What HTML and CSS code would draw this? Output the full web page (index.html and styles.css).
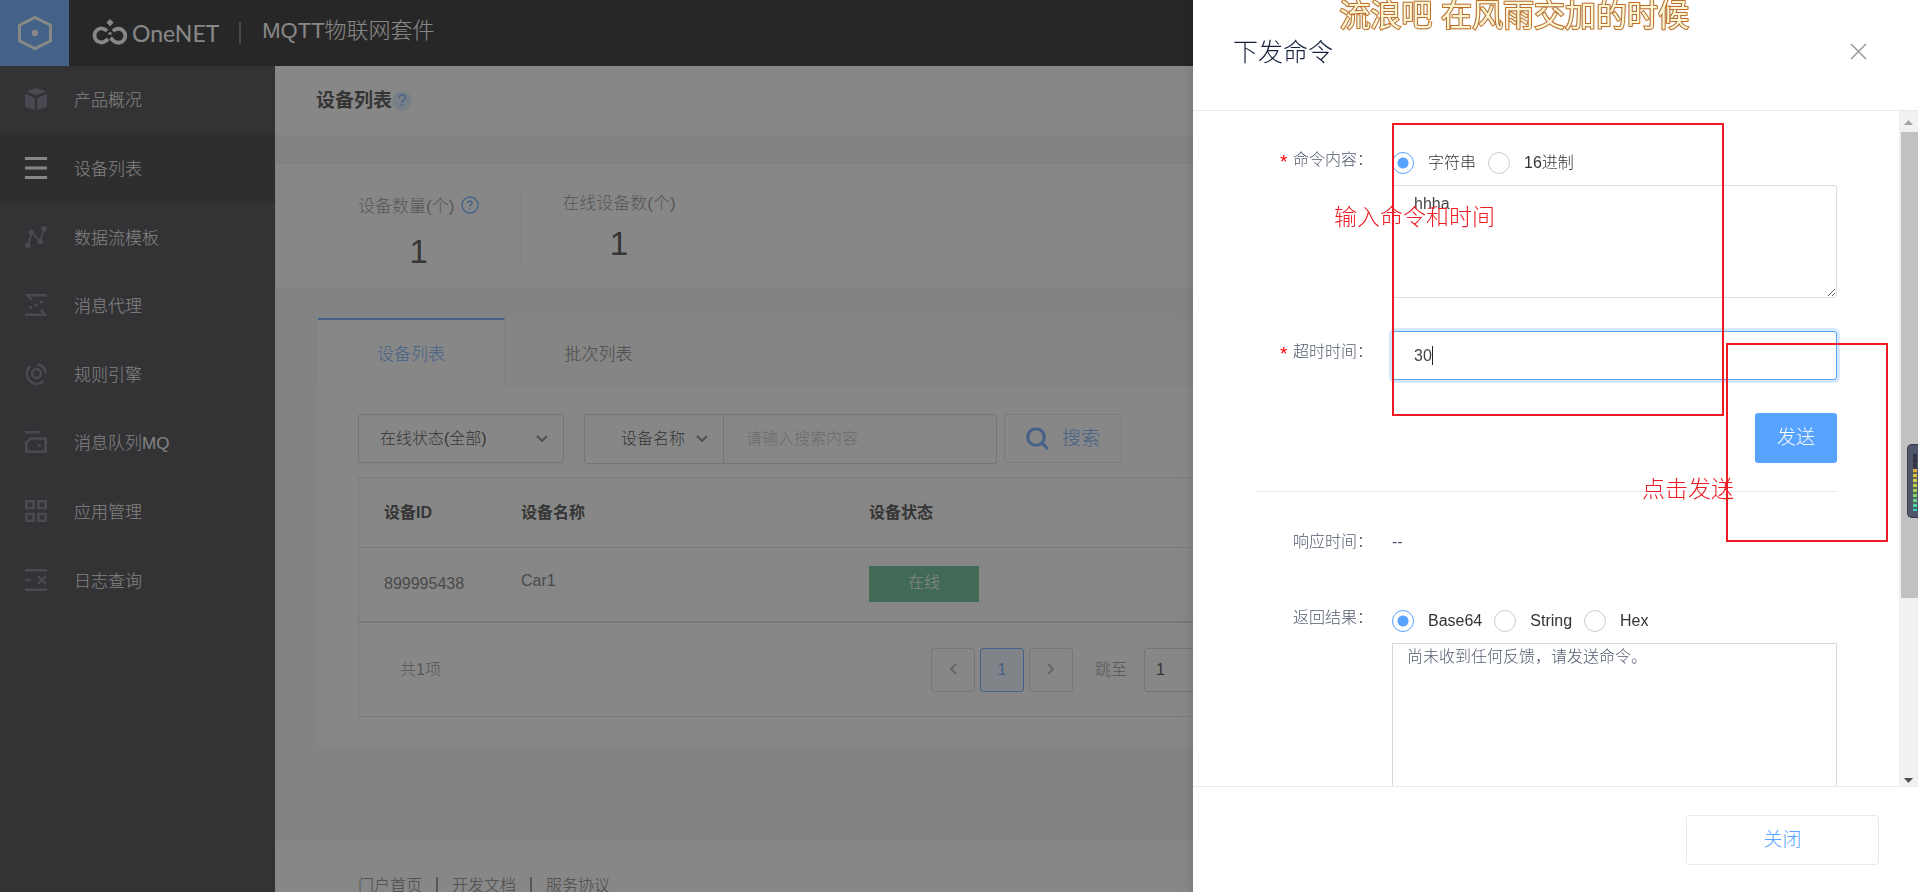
FILE: index.html
```html
<!DOCTYPE html>
<html lang="zh-CN">
<head>
<meta charset="utf-8">
<title>MQTT物联网套件 - 设备列表</title>
<link rel="stylesheet" href="styles.css">
</head>
<body>
<div class="app">
  <header class="topbar">
    <a class="home" href="#" aria-label="首页">
      <svg width="36" height="36" viewBox="0 0 36 36" fill="none" stroke="#fff" stroke-width="3"><path d="M18 2.500 33.500 10.200V25.800L18 33.500 2.500 25.800V10.200Z"/><circle cx="18" cy="18" r="3.200" fill="#fff" stroke="none"/></svg>
    </a>
    <a class="brand" href="#">
      <svg width="38" height="26" viewBox="0 0 38 26" fill="none" stroke="#fff" stroke-width="3.800"><path d="M16 12.200A7 7 0 1 0 15 21.800L17 19.800"/><path d="M22 12.200A7 7 0 1 1 22.500 21.800L19.500 19"/><path d="M17.500 14.500H20.500" stroke-width="2.500"/><path d="M19 0 22.500 3.500 19 7.500 15.500 3.500Z" fill="#fff" stroke="none"/></svg>
      <span>OneNET</span>
    </a>
    <span class="split"></span>
    <span class="product">MQTT物联网套件</span>
  </header>
  <div class="shell">
    <aside class="sidebar">
      <nav class="menu">
        <a href="#"><svg viewBox="0 0 22 22" fill="currentColor"><path d="M11 0 21 3.500 11 7.500 1.500 3.500ZM0 6 9.800 10V22L2 19.500Q0 18.800 0 17ZM22 6 12.200 10V22L20 19.500Q22 18.800 22 17Z"/></svg>产品概况</a>
        <a href="#" class="active"><svg viewBox="0 0 22 22" stroke="currentColor" stroke-width="3"><path d="M0 1.500H22M0 11H22M0 20.500H22"/></svg>设备列表</a>
        <a href="#"><svg viewBox="0 0 22 22" stroke="currentColor" stroke-width="1.600" fill="none"><path d="M3 19 7 6 15 16 19 3"/><g fill="currentColor" stroke="none"><circle cx="2.800" cy="19.200" r="2.800"/><circle cx="6.500" cy="6.500" r="2.800"/><circle cx="15.200" cy="15.500" r="2.800"/><circle cx="19.200" cy="2.800" r="2.800"/></g></svg>数据流模板</a>
        <a href="#"><svg viewBox="0 0 22 22" stroke="currentColor" stroke-width="2.400" fill="none"><path d="M22 1.200H2.500L7 6M0 20.800H20L16 16M4 13.500H7M9.500 11H12.500M15 8H18"/></svg>消息代理</a>
        <a href="#"><svg viewBox="0 0 22 22" stroke="currentColor" stroke-width="2.400" fill="none"><circle cx="11.500" cy="10.500" r="4.500"/><path d="M5 3.500A9.800 9.800 0 1 0 18.500 18.200M12 1.200A9.500 9.500 0 0 1 20.800 10"/></svg>规则引擎</a>
        <a href="#"><svg viewBox="0 0 22 22" stroke="currentColor" stroke-width="2.600" fill="none"><path d="M0 1.300H15M5.500 7.500H20.700V20.700H1.300V11.500ZM13 14.500H16"/></svg>消息队列MQ</a>
        <a href="#"><svg viewBox="0 0 22 22" stroke="currentColor" stroke-width="2.600" fill="none"><path d="M1.300 1.300H8.500V8H1.300ZM13.500 1.300H20.700V8H13.500ZM1.300 14H8.500V20.700H1.300ZM13.500 14H20.700V20.700H13.500Z"/></svg>应用管理</a>
        <a href="#"><svg viewBox="0 0 22 22" stroke="currentColor" stroke-width="2.400" fill="none"><path d="M0 1.200H22M0 20.800H22M0 11H5.500M13 7 21 15M21 7 13 15"/></svg>日志查询</a>
      </nav>
    </aside>
    <main class="main">
      <div class="pagehead"><h1>设备列表</h1><span class="tip">?</span></div>
      <section class="stats">
        <div class="stat first">
          <div class="stat-label">设备数量(个)<svg width="18" height="18" viewBox="0 0 18 18" fill="none" stroke="#57a3ff" stroke-width="1.400"><circle cx="9" cy="9" r="8"/><path d="M6.800 7.200Q6.900 5 9 5T11.200 7Q11.200 8 9.900 8.800 9 9.400 9 10.500M9 12v1.400"/></svg></div>
          <div class="stat-num">1</div>
        </div>
        <div class="stat">
          <div class="stat-label">在线设备数(个)</div>
          <div class="stat-num">1</div>
        </div>
      </section>
      <section class="panel">
        <div class="tabs"><button type="button" class="on">设备列表</button><button type="button">批次列表</button></div>
        <div class="panel-body">
          <form class="filters">
            <label class="pick status"><select aria-label="在线状态"><option>在线状态(全部)</option></select><svg width="12" height="8" viewBox="0 0 12 8"><path d="M1 1 6 6 11 1"/></svg></label>
            <div class="group">
              <label class="pick field"><select aria-label="搜索字段"><option>设备名称</option></select><svg width="12" height="8" viewBox="0 0 12 8"><path d="M1 1 6 6 11 1"/></svg></label>
              <input class="keyword" type="text" placeholder="请输入搜索内容" aria-label="搜索内容">
            </div>
            <button type="button" class="search"><svg width="23" height="23" viewBox="0 0 23 23" fill="none" stroke="#57a3ff" stroke-width="3"><circle cx="10" cy="10" r="8.300"/><path d="M16 16 22 22"/></svg>搜索</button>
          </form>
          <div class="listing">
            <table>
              <thead><tr><th class="c-id">设备ID</th><th class="c-name">设备名称</th><th>设备状态</th></tr></thead>
              <tbody><tr><td class="dev-id">899995438</td><td class="dev-name">Car1</td><td><span class="online">在线</span></td></tr></tbody>
            </table>
            <div class="pager">
              <span class="total">共1项</span>
              <button type="button" aria-label="上一页"><svg width="8" height="12" viewBox="0 0 8 12"><path d="M7 1 2 6 7 11"/></svg></button>
              <button type="button" class="on">1</button>
              <button type="button" aria-label="下一页"><svg width="8" height="12" viewBox="0 0 8 12"><path d="M1 1 6 6 1 11"/></svg></button>
              <label for="jump">跳至</label>
              <input id="jump" type="text" value="1">
            </div>
          </div>
        </div>
      </section>
      <footer class="foot"><a href="#">门户首页</a><i></i><a href="#">开发文档</a><i></i><a href="#">服务协议</a></footer>
    </main>
  </div>
</div>
<div class="mask"></div>

<section class="drawer" role="dialog" aria-labelledby="drawer-title">
  <header class="drawer-head">
    <h2 id="drawer-title">下发命令</h2>
    <button type="button" class="close" aria-label="关闭窗口"><svg width="17" height="17" viewBox="0 0 17 17" stroke="#999" stroke-width="1.500"><path d="M1 1 16 16M16 1 1 16"/></svg></button>
  </header>
  <div class="drawer-body">
    <form class="form">
      <div class="row command">
        <label class="name req" for="cmd">命令内容：</label>
        <div class="ctl">
          <div class="radios">
            <label><input type="radio" name="kind" checked>字符串</label>
            <label><input type="radio" name="kind">16进制</label>
          </div>
          <textarea id="cmd">hhha</textarea>
        </div>
      </div>
      <div class="row timeout">
        <label class="name req" for="timeout">超时时间：</label>
        <div class="ctl caret-box"><input id="timeout" class="time" type="text" value="30"><span class="caret"></span></div>
      </div>
      <button type="button" class="send">发送</button>
      <hr>
      <div class="row reply"><span class="name">响应时间：</span><span class="ctl">--</span></div>
      <div class="row result">
        <span class="name">返回结果：</span>
        <div class="ctl">
          <div class="radios">
            <label><input type="radio" name="fmt" checked>Base64</label>
            <label><input type="radio" name="fmt">String</label>
            <label><input type="radio" name="fmt">Hex</label>
          </div>
          <div class="output">尚未收到任何反馈，请发送命令。</div>
        </div>
      </div>
    </form>
    <div class="scroll">
      <svg width="9" height="5" viewBox="0 0 9 5" fill="#a3a3a3"><path d="M0 5 4.500 0 9 5Z"/></svg>
      <span class="thumb"></span>
      <svg width="9" height="5" viewBox="0 0 9 5" fill="#505050"><path d="M0 0H9L4.500 5Z"/></svg>
    </div>
  </div>
  <footer class="drawer-foot"><button type="button">关闭</button></footer>
</section>

<div class="lyric">流浪吧 在风雨交加的时候</div>
<div class="mark box-input"></div>
<div class="mark box-send"></div>
<div class="note note-input">输入命令和时间</div>
<div class="note note-send">点击发送</div>
<div class="meter"><span></span></div>
</body>
</html>
```

FILE: styles.css
```css
* { box-sizing: border-box; }
body {
  margin: 0;
  height: 100vh;
  overflow: hidden;
  font: 300 16px/24px "Liberation Sans", "Noto Sans CJK SC", sans-serif;
  color: #666;
}
button, input, select, textarea { font: inherit; color: inherit; margin: 0; }
button { padding: 0; background: #fff; border: 1px solid #e0e0e0; border-radius: 3px; }
a { color: inherit; text-decoration: none; }
h1, h2 { margin: 0; }

/* top bar */
.app { height: 100vh; overflow: hidden; display: flex; flex-direction: column; background: #f5f5f5; }
.topbar { flex: none; height: 66px; display: flex; align-items: center; background: #0f0f0f; color: #fff; }
.home { width: 69px; height: 66px; display: flex; align-items: center; justify-content: center; background: #57a3ff; }
.brand { display: flex; align-items: center; gap: 3px; margin-left: 22px; font: 400 23px/30px Lato, sans-serif; }
.brand svg { margin-bottom: 2px; }
.split { width: 2px; height: 22px; margin: 0 21px 0 20px; background: #666; }
.product { font-size: 22px; line-height: 30px; margin-bottom: 4px; }

/* side menu */
.shell { flex: 1; display: flex; min-height: 0; }
.sidebar { flex: none; width: 275px; background: #2d2d32; }
.menu { display: grid; grid-template-rows: repeat(8, 1fr); height: 549px; }
.menu a { display: flex; align-items: center; gap: 27px; padding: 2px 0 0 25px; font-size: 17px; color: #f0f0f0; }
.menu svg { width: 22px; height: 22px; margin-bottom: 4px; color: #67677a; }
.menu .active { background: #212121; }
.menu .active svg { color: #fff; }

/* page */
.main { flex: 1; display: flex; flex-direction: column; min-width: 0; }
.pagehead { flex: none; height: 69px; display: flex; align-items: center; padding-left: 41px; background: #fff; }
.pagehead h1 { font-size: 19px; font-weight: 700; color: #333; }
.tip { width: 20px; height: 20px; border-radius: 50%; background: #dcebff; color: #57a3ff; text-align: center; line-height: 20px; }
.stats { flex: none; display: flex; height: 127px; margin-top: 28px; padding: 23px 41px; background: #fff; border: 1px solid #ececec; }
.stat { padding: 5px 41px 0; color: #888; font-size: 17px; text-align: center; }
.stat.first { padding-top: 8px; border-right: 1px solid #efefef; }
.stat-label { display: flex; align-items: center; gap: 7px; }
.stat-label svg { margin-bottom: 4px; }
.stat-num { margin-top: 10px; font-size: 33px; line-height: 36px; color: #333; }
.first .stat-num { margin-top: 15px; }
.panel { flex: none; margin: 27px 41px 0; padding-bottom: 29px; background: #fff; }
.tabs { display: flex; height: 70px; padding-left: 1px; background: #f9f9f9; border: 1px solid #efefef; }
.tabs button { width: 187px; height: 69px; padding-top: 4px; border: 0; border-radius: 0; background: none; font-size: 17px; }
.tabs .on { padding-top: 2px; background: #fff; border-top: 2px solid #57a3ff; border-right: 1px solid #ececec; color: #57a3ff; }
.panel-body { padding: 27px 41px 0 42px; }
.filters { display: flex; height: 50px; color: #333; }
.pick { position: relative; display: block; height: 49px; }
.pick select { width: 100%; height: 100%; padding: 0 21px; appearance: none; border: 1px solid #d2d2d2; border-radius: 3px; background: #fff; }
.pick svg { position: absolute; right: 16px; top: 21px; fill: none; stroke: #777; stroke-width: 2; }
.status { width: 206px; margin-right: 20px; }
.group { display: flex; width: 413px; height: 50px; margin-right: 7px; }
.field { width: 140px; height: 50px; }
.field select { padding: 0 0 0 36px; border-radius: 3px 0 0 3px; }
.keyword { flex: 1; min-width: 0; height: 50px; padding: 0 22px; border: 1px solid #d2d2d2; border-left: 0; border-radius: 0 3px 3px 0; }
.keyword::placeholder { color: #bbb; }
.search { width: 118px; height: 49px; display: flex; align-items: center; justify-content: center; gap: 13px; font-size: 19px; color: #57a3ff; }

.listing { margin-top: 13px; border: 1px solid #e4e4e4; }
table { width: 100%; border-collapse: collapse; table-layout: fixed; }
th { height: 69px; padding: 2px 0 0; text-align: left; font-weight: 700; color: #333; border-bottom: 1px solid #e4e4e4; }
td { height: 75px; padding: 0; border-bottom: 2px solid #dadada; }
th.c-id { width: 162px; }
th.c-name { width: 348px; }
th.c-id, td.dev-id { padding-left: 25px; }
td.dev-name { padding-bottom: 6px; }
.online { display: block; width: 110px; height: 36px; line-height: 34px; text-align: center; background: #52b684; color: #fff; }
.pager { display: flex; align-items: center; height: 93px; padding-left: 41px; color: #888; }
.total { width: 531px; }
.pager button { width: 44px; height: 44px; margin-right: 5px; border-color: #d8d8d8; }
.pager button svg { fill: none; stroke: #aaa; stroke-width: 2; }
.pager .on { border-color: #57a3ff; background: #eef5ff; color: #57a3ff; }
.pager label { margin: 0 17px; }
#jump { width: 66px; height: 44px; padding: 0 11px; border: 1px solid #d2d2d2; border-radius: 3px; color: #333; }
.foot { flex: 1 0 auto; display: flex; gap: 14px; margin-top: 95px; padding: 33px 83px; background: #fff; }
.foot i { width: 2px; height: 18px; margin-top: 3px; background: #888; }

.mask { position: fixed; inset: 0; background: rgba(55, 55, 55, .6); }

/* drawer */
.drawer { position: fixed; inset: 0 0 0 auto; width: 725px; display: flex; flex-direction: column; background: #fff; box-shadow: 0 4px 12px rgba(0, 0, 0, .15); color: #515a6e; }
.drawer-head { flex: none; height: 111px; display: flex; align-items: flex-start; justify-content: space-between; padding: 35px 51px 0 40px; border-bottom: 1px solid #e8eaec; }
.drawer-head h2 { font-size: 25px; line-height: 34px; font-weight: 300; color: #17233d; }
.close { height: 32px; border: 0; background: none; }
.close svg { display: block; }
.drawer-body { flex: 1; min-height: 0; display: flex; overflow: hidden; }
.form { flex: 1; min-width: 0; padding: 37px 62px 0 62px; }
.row { display: flex; }
.name { flex: none; width: 137px; padding-left: 38px; white-space: nowrap; }
.req { padding-left: 25px; }
.req::before { content: "*"; display: inline-block; width: 13px; color: #f00; vertical-align: -3px; font-size: 19px; line-height: 16px; }
.ctl { flex: 1; min-width: 0; }
.radios { display: flex; gap: 12px; padding-top: 3px; height: 37px; color: #333; }
.radios label { display: flex; height: 24px; align-items: center; gap: 14px; }
.radios input { appearance: none; width: 22px; height: 22px; border: 1px solid #ccc; border-radius: 50%; background: #fff; }
.radios input:checked { border-color: #57a3ff; background: radial-gradient(circle, #57a3ff 5px, #fff 6px); }
textarea { display: block; width: 100%; height: 113px; padding: 6px 21px; border: 1px solid #dcdcdc; border-radius: 3px; color: #444; }
.timeout { margin-top: 33px; }
.timeout .name { padding-top: 9px; }
.caret-box { position: relative; }
.time { display: block; width: 100%; height: 49px; padding: 0 21px; border: 1px solid #57a3f3; border-radius: 3px; outline: 0; box-shadow: 0 0 0 3px rgba(45, 140, 240, .2); color: #444; }
.caret { position: absolute; left: 40px; top: 15px; width: 1px; height: 19px; background: #222; }
.send { display: block; width: 82px; height: 50px; margin: 33px 0 0 auto; border: 0; background: #57a3ff; color: #fff; font-size: 19px; }
hr { height: 1px; margin: 28px 0 38px; border: 0; background: #ebebeb; }
.result { margin-top: 52px; }
.output { height: 300px; padding: 1px 14px; border: 1px solid #d8d8d8; white-space: nowrap; }
.scroll { width: 19px; flex: none; display: flex; flex-direction: column; align-items: center; padding: 9px 0 3px; background: #f1f1f1; }
.thumb { align-self: stretch; height: 466px; margin: 7px 0 auto 2px; background: #c1c1c1; }
.drawer-foot { flex: none; height: 106px; display: flex; justify-content: flex-end; align-items: flex-start; padding: 28px 39px; border-top: 1px solid #e8eaec; }
.drawer-foot button { width: 193px; height: 50px; border-color: #e8eaec; color: #57a3ff; font-size: 19px; }

/* floating annotations */
.lyric { position: fixed; top: -4px; right: 229px; white-space: pre; font-size: 31px; line-height: 40px; font-weight: 400; color: #fff6d0; -webkit-text-stroke: 2px #e07b20; paint-order: stroke fill; text-shadow: 0 0 2px #555; }
.mark { position: fixed; border: 2px solid #ed1c24; }
.box-input { top: 123px; right: 194px; width: 332px; height: 293px; }
.box-send { top: 343px; right: 30px; width: 162px; height: 199px; }
.note { position: fixed; color: #ed1c24; font-size: 23px; line-height: 30px; font-weight: 300; }
.note-input { top: 202px; right: 423px; }
.note-send { top: 474px; right: 184px; }
.meter { position: fixed; top: 444px; right: 0; width: 11px; height: 74px; padding: 9px 1px 8px 5px; border: 1px solid #3a3d48; border-right: 0; border-radius: 5px 0 0 5px; background: #50566a; }
.meter span { display: block; height: 57px; background: repeating-linear-gradient(transparent 0 3px, rgba(60, 65, 80, .7) 3px 5px), linear-gradient(#2f3342 0 15px, #e8a83e 15px, #d0d04a 27px, #9ccf5c 37px, #35d6c4); }
```
